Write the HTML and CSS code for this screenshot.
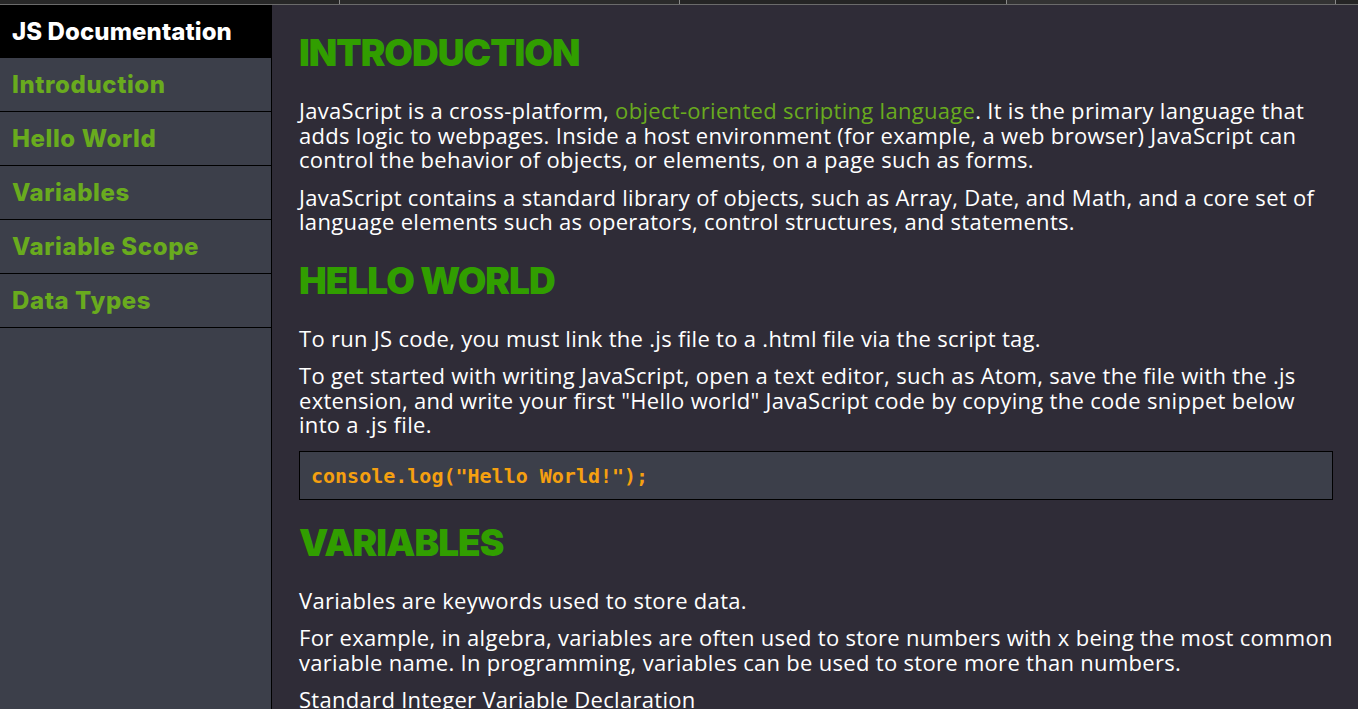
FILE: index.html
```html
<!DOCTYPE html>
<html lang="en">
<head>
<meta charset="utf-8">
<title>JS Documentation</title>
<link rel="stylesheet" href="styles.css">
</head>
<body>
<div class="topbar">
  <div class="tab t1"></div>
  <div class="tab t2"></div>
  <div class="tab t3"></div>
  <div class="tab t4"></div>
  <div class="tab t5"></div>
</div>
<div class="page">
  <nav class="sidebar" id="navbar">
    <header class="nav-title">JS Documentation</header>
    <a class="nav-link" href="#Introduction">Introduction</a>
    <a class="nav-link" href="#Hello_World">Hello World</a>
    <a class="nav-link" href="#Variables">Variables</a>
    <a class="nav-link" href="#Variable_Scope">Variable Scope</a>
    <a class="nav-link" href="#Data_Types">Data Types</a>
  </nav>
  <main class="main" id="main-doc">
    <section class="section" id="Introduction">
      <header class="section-title">INTRODUCTION</header>
      <p>JavaScript is a cross-platform, <a class="inline-link" href="#">object-oriented scripting language</a>. It is the primary language that adds logic to webpages. Inside a host environment (for example, a web browser) JavaScript can control the behavior of objects, or elements, on a page such as forms.</p>
      <p>JavaScript contains a standard library of objects, such as Array, Date, and Math, and a core set of language elements such as operators, control structures, and statements.</p>
    </section>
    <section class="section section-code" id="Hello_World">
      <header class="section-title">HELLO WORLD</header>
      <p>To run JS code, you must link the .js file to a .html file via the script tag.</p>
      <p class="before-code">To get started with writing JavaScript, open a text editor, such as Atom, save the file with the .js extension, and write your first "Hello world" JavaScript code by copying the code snippet below into a .js file.</p>
      <pre class="code"><code>console.log("Hello World!");</code></pre>
    </section>
    <section class="section" id="Variables">
      <header class="section-title">VARIABLES</header>
      <p>Variables are keywords used to store data.</p>
      <p>For example, in algebra, variables are often used to store numbers with x being the most common variable name. In programming, variables can be used to store more than numbers.</p>
      <p>Standard Integer Variable Declaration</p>
    </section>
  </main>
</div>
</body>
</html>
```

FILE: styles.css
```css
* { box-sizing: border-box; }
html, body {
  margin: 0;
  padding: 0;
  height: 100%;
  overflow: hidden;
}
body {
  background: #2f2c37;
  color: #ffffff;
  font-family: "Open Sans", "Noto Sans", sans-serif;
  display: flex;
  flex-direction: column;
}
.topbar {
  height: 5px;
  display: flex;
  background: #262626;
  border-bottom: 1px solid #6b6b6b;
  flex: none;
}
.tab { height: 4px; border-right: 1px solid #8a8a8a; }
.t1 { width: 340px; background: #272727; }
.t2 { width: 340px; background: #2b2b2b; }
.t3 { width: 327px; background: #252525; }
.t4 { width: 329px; background: #333333; }
.t5 { flex: 1; border-right: none; background: #252525; }

.page {
  flex: 1;
  display: flex;
  min-height: 0;
}
.sidebar {
  width: 272px;
  flex: none;
  background: #3c3f4a;
  border-right: 1px solid #000;
  display: flex;
  flex-direction: column;
  font-family: Inter, "Noto Sans", sans-serif;
}
.nav-title {
  height: 53px;
  background: #000;
  color: #fff;
  font-size: 24px;
  font-weight: 800;
  padding-left: 12px;
  display: flex;
  align-items: center;
  letter-spacing: 0.1px;
}
.nav-link {
  height: 54px;
  display: flex;
  align-items: center;
  padding-left: 12px;
  color: #69ab1e;
  font-size: 24px;
  font-weight: 800;
  text-decoration: none;
  border-bottom: 1px solid #000;
  letter-spacing: 0.6px;
}
.main {
  flex: 1;
  padding: 28px 25px 0 27px;
  overflow: hidden;
}
.section-title {
  font-family: Inter, "Noto Sans", sans-serif;
  font-weight: 900;
  font-size: 37px;
  color: #319e00;
  line-height: 40px;
  margin: 0 0 25px 0;
  letter-spacing: -1px;
}
.section { margin-bottom: 27px; }
.section-code { margin-bottom: 23px; }
.main p {
  font-size: 22px;
  line-height: 24.5px;
  margin: 0 0 13px 0;
  letter-spacing: 0.3px;
}
.main p.before-code { margin-bottom: 14px; }
.inline-link {
  color: #69ab1e;
  text-decoration: none;
}
.code {
  background: #3c3f4a;
  border: 1px solid #000;
  margin: 0;
  padding: 13px 11px 10px;
  font-family: "Liberation Mono", "Courier New", monospace;
  font-weight: bold;
  font-size: 20px;
  line-height: 22px;
  color: #f5a010;
}
```
